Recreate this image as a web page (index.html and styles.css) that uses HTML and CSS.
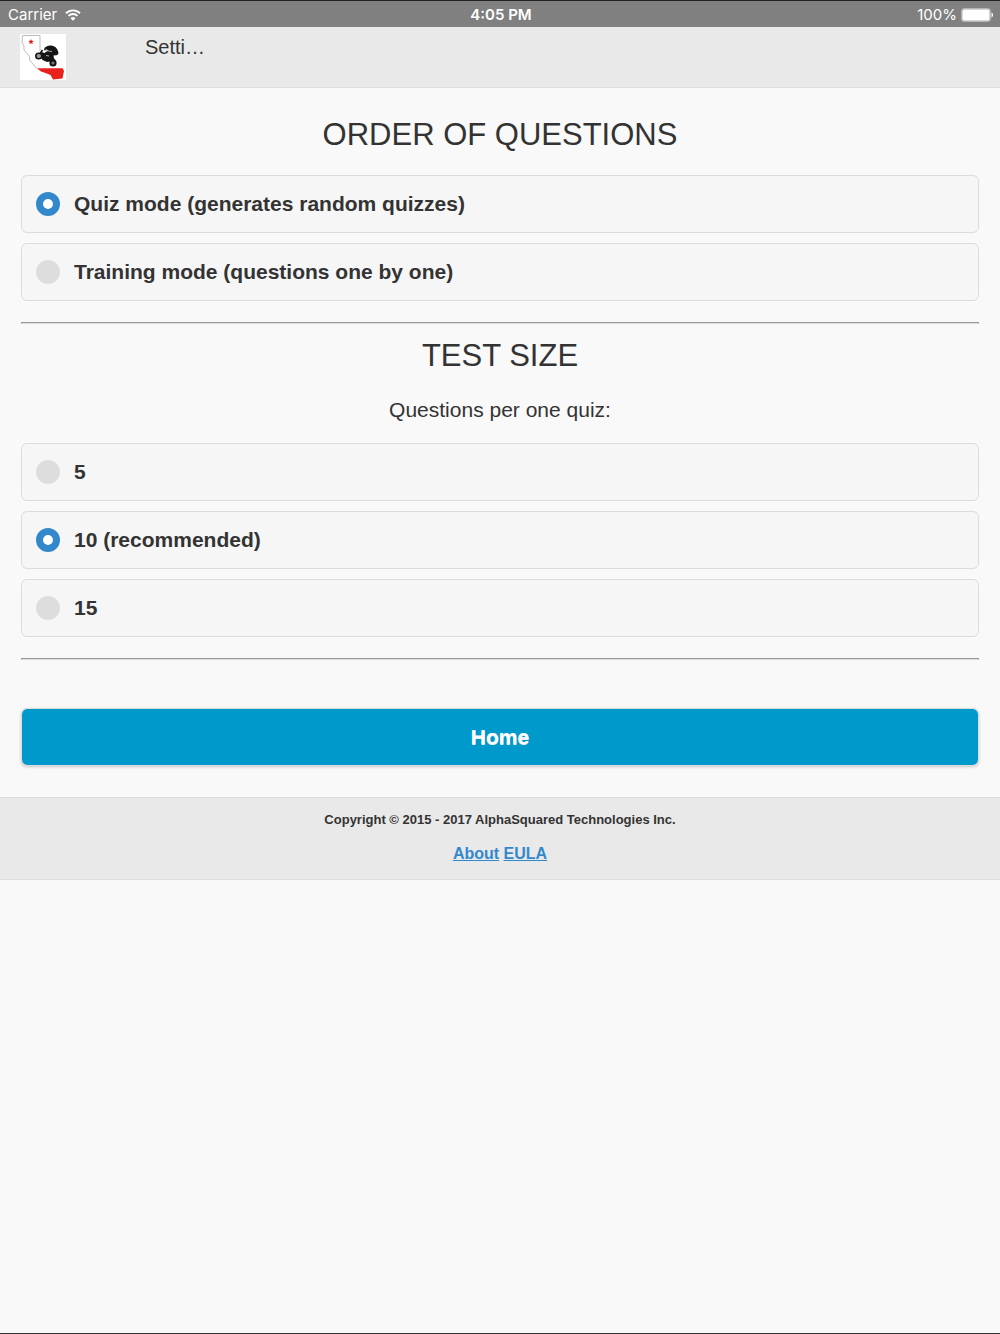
FILE: index.html
```html
<!DOCTYPE html>
<html lang="en">

<head>
    <meta charset="UTF-8">
    <meta name="viewport" content="width=device-width, initial-scale=1.0">
    <title>Settings</title>
    <link rel="stylesheet" href="styles.css">
</head>

<body>
    <div class="status-bar">
        <div class="status-left">
            <span>Carrier</span>
            <svg class="wifi" viewBox="0 0 16 12" width="16" height="12" aria-hidden="true">
                <path d="M1 4.200a10 10 0 0 1 14 0M3.500 6.900a6.400 6.400 0 0 1 9 0" fill="none" stroke="#fff" stroke-width="1.900"/>
                <path d="M5.500 9.200a3.600 3.600 0 0 1 5 0L8 11.800z" fill="#fff"/>
            </svg>
        </div>
        <div class="status-time">4:05 PM</div>
        <div class="status-right">
            <span>100%</span>
            <svg class="battery" viewBox="0 0 33 14" width="33" height="14" aria-hidden="true">
                <rect x="1" y="1" width="28" height="12" rx="2.500" fill="#fff" stroke="#c8c8c8" stroke-width="1.500"/>
                <path d="M30.500 4.500c2 .7 2 4.300 0 5z" fill="#fff"/>
            </svg>
        </div>
    </div>

    <header class="header">
        <svg class="logo" viewBox="0 0 46 46" width="46" height="46" role="img" aria-label="Logo">
            <rect width="46" height="46" fill="#fff"/>
            <path d="M20 17V1.500H2.500L2 8l2 4v4l3.500 4 2 2.500V26l3.500 4 4 4.500" fill="none" stroke="#aaa" stroke-width=".8"/>
            <path d="M17 34.200H42.500L44 37 42.500 44.500 33 45.500 30.500 41 25.500 39 21 37.500z" fill="#e8211d"/>
            <path d="M11 5l.8 1.700 1.900.2-1.400 1.300.4 1.900-1.700-.9-1.700.9.400-1.900-1.400-1.300 1.900-.2z" fill="#e8211d"/>
            <path d="M24 15c1-2.500 4-3.700 7-3.500 4 .3 6.500 3.200 7.300 6.500.4 1.700-.3 3-1.800 3.200l-3 .3.500 3 2 2-4 .5-5 1-4.500-2-1.500-3-1.500-2-2-1 4-2 3 1 2-1.500 2-.5-1.500-1-2.500.5z" fill="#151515"/>
            <path d="M22.500 16l-4 6M28 25l5 4.500" stroke="#151515" stroke-width="1.600"/>
            <circle cx="33" cy="29" r="2.600" fill="#777" stroke="#151515" stroke-width="2"/>
            <ellipse cx="18.800" cy="22" rx="3" ry="2.700" fill="#999" stroke="#151515" stroke-width="1.600"/>
            <path d="M25.500 15.200l3.500 2 3 .3M26 21.500l3 .5" fill="none" stroke="#ccc" stroke-width=".8"/>
        </svg>
        <h1 class="title">Setti…</h1>
    </header>

    <main class="content">
        <fieldset class="group">
            <legend class="heading">ORDER OF QUESTIONS</legend>
            <label class="option" for="mode-quiz">
                <input type="radio" id="mode-quiz" name="mode" value="quiz" checked>
                <span>Quiz mode (generates random quizzes)</span>
            </label>
            <label class="option" for="mode-training">
                <input type="radio" id="mode-training" name="mode" value="training">
                <span>Training mode (questions one by one)</span>
            </label>
        </fieldset>
        <hr>
        <fieldset class="group">
            <legend class="heading">TEST SIZE</legend>
            <p class="hint">Questions per one quiz:</p>
            <label class="option" for="size-5">
                <input type="radio" id="size-5" name="size" value="5">
                <span>5</span>
            </label>
            <label class="option" for="size-10">
                <input type="radio" id="size-10" name="size" value="10" checked>
                <span>10 (recommended)</span>
            </label>
            <label class="option" for="size-15">
                <input type="radio" id="size-15" name="size" value="15">
                <span>15</span>
            </label>
        </fieldset>
        <hr>
        <button type="button" class="home">Home</button>
    </main>

    <footer class="footer">
        <p class="copyright">Copyright © 2015 - 2017 AlphaSquared Technologies Inc.</p>
        <p class="links"><a href="#about">About</a> <a href="#eula">EULA</a></p>
    </footer>
</body>

</html>
```
FILE: styles.css
```css
* {
    box-sizing: border-box;
}

body {
    margin: 0;
    min-height: 100vh;
    border-bottom: 1px solid #333;
    background-color: #f9f9f9;
    color: #333;
    font-family: "Liberation Sans", Arial, sans-serif;
    font-size: 21px;
    line-height: 28px;
}

.status-bar {
    display: grid;
    grid-template-columns: 1fr auto 1fr;
    align-items: center;
    height: 27px;
    padding: 0 6px 0 8px;
    border-top: 1px solid #222;
    background-color: #808080;
    color: #fff;
    font-family: Inter, "Liberation Sans", sans-serif;
    font-size: 15px;
}

.status-left,
.status-right {
    display: flex;
    align-items: center;
    gap: 8px;
}

.status-right {
    justify-content: flex-end;
    gap: 4px;
}

.status-time {
    font-weight: 600;
}

.header {
    display: flex;
    align-items: flex-start;
    gap: 79px;
    padding: 7px 20px;
    border-bottom: 1px solid #ddd;
    background-color: #e9e9e9;
}

.logo {
    flex: none;
}

.title {
    margin: 0;
    font-size: 20px;
    font-weight: normal;
    line-height: 26px;
}

.content {
    padding: 21px 21px 31px;
}

.group {
    margin: 0;
    padding: 0;
    border: 0;
}

.heading {
    width: 100%;
    padding: 6px 0 20px;
    font-size: 31px;
    line-height: 40px;
    text-align: center;
}

.hint {
    margin: 0 0 19px;
    text-align: center;
}

.option {
    display: flex;
    align-items: center;
    gap: 14px;
    margin-bottom: 10px;
    padding: 14px;
    border: 1px solid #ddd;
    border-radius: 6px;
    background-color: #f6f6f6;
    font-weight: bold;
}

.option input {
    appearance: none;
    width: 24px;
    height: 24px;
    margin: 0;
    border-radius: 50%;
    background-color: #ddd;
}

.option input:checked {
    border: 7px solid #38c;
    background-color: #fff;
}

hr {
    margin: 11px 0 6px;
    border: 1px solid #999;
    border-bottom-color: #ddd;
}

.home {
    display: block;
    width: 100%;
    margin-top: 48px;
    padding: 14px;
    border: 1px solid #ddd;
    border-radius: 6px;
    background-color: #09c;
    background-clip: padding-box;
    box-shadow: 0 1px 3px rgba(0, 0, 0, 0.2);
    color: #fff;
    font: bold 21px/28px "Liberation Sans", Arial, sans-serif;
    text-shadow: 0 1px 0 #eee;
}

.footer {
    padding: 8px 21px 11px;
    border: 1px solid #ddd;
    border-width: 1px 0;
    background-color: #e9e9e9;
    font-weight: bold;
    text-align: center;
}

.footer p {
    margin: 0;
}

.copyright {
    font-size: 13px;
}

.links {
    padding-top: 6px;
    font-size: 16px;
}

.links a {
    color: #38c;
}
```
